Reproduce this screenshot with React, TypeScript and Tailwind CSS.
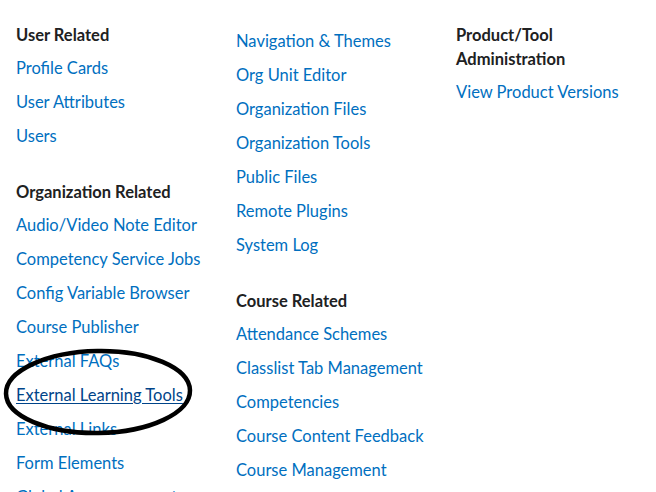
export default function App() {
  const col1 = [
    {
      title: "User Related",
      links: ["Profile Cards", "User Attributes", "Users"],
    },
    {
      title: "Organization Related",
      links: [
        "Audio/Video Note Editor",
        "Competency Service Jobs",
        "Config Variable Browser",
        "Course Publisher",
        "External FAQs",
        "External Learning Tools",
        "External Links",
        "Form Elements",
        "Global Announcements",
      ],
    },
  ];

  const col2 = [
    {
      title: "",
      links: [
        "Navigation & Themes",
        "Org Unit Editor",
        "Organization Files",
        "Organization Tools",
        "Public Files",
        "Remote Plugins",
        "System Log",
      ],
    },
    {
      title: "Course Related",
      links: [
        "Attendance Schemes",
        "Classlist Tab Management",
        "Competencies",
        "Course Content Feedback",
        "Course Management",
      ],
    },
  ];

  const col3 = [
    {
      title: "Product/Tool Administration",
      links: ["View Product Versions"],
    },
  ];

  const renderColumn = (sections: { title: string; links: string[] }[]) => (
    <div className="flex flex-col">
      {sections.map((s, i) => (
        <div key={i} className={i > 0 ? "mt-7" : ""}>
          {s.title && (
            <h2 className="text-[16.5px] leading-6 font-bold text-[#202122] mb-[3px]">
              {s.title}
            </h2>
          )}
          <ul>
            {s.links.map((l) => {
              const focused = l === "External Learning Tools";
              return (
                <li key={l} className="h-[34px] flex items-center pt-[2px]">
                  <a
                    href="#"
                    className={
                      focused
                        ? "text-[16.5px] text-[#004489] underline underline-offset-2"
                        : "text-[16.5px] text-[#006fbf]"
                    }
                  >
                    {l}
                  </a>
                </li>
              );
            })}
          </ul>
        </div>
      ))}
    </div>
  );

  return (
    <div
      className="relative h-[492px] overflow-hidden bg-white pl-4 pt-[23px]"
      style={{ fontFamily: "Lato, 'Noto Sans', sans-serif" }}
    >
      <div className="grid grid-cols-[200px_200px_200px] gap-x-5">
        {renderColumn(col1)}
        {renderColumn(col2)}
        {renderColumn(col3)}
      </div>

      <svg
        className="absolute left-0 top-[345px] pointer-events-none"
        width="200"
        height="96"
        viewBox="0 0 200 96"
      >
        <ellipse
          cx="98"
          cy="47"
          rx="92"
          ry="41"
          fill="none"
          stroke="#000"
          strokeWidth="4.5"
          transform="rotate(-1 98 47)"
        />
      </svg>
    </div>
  );
}
